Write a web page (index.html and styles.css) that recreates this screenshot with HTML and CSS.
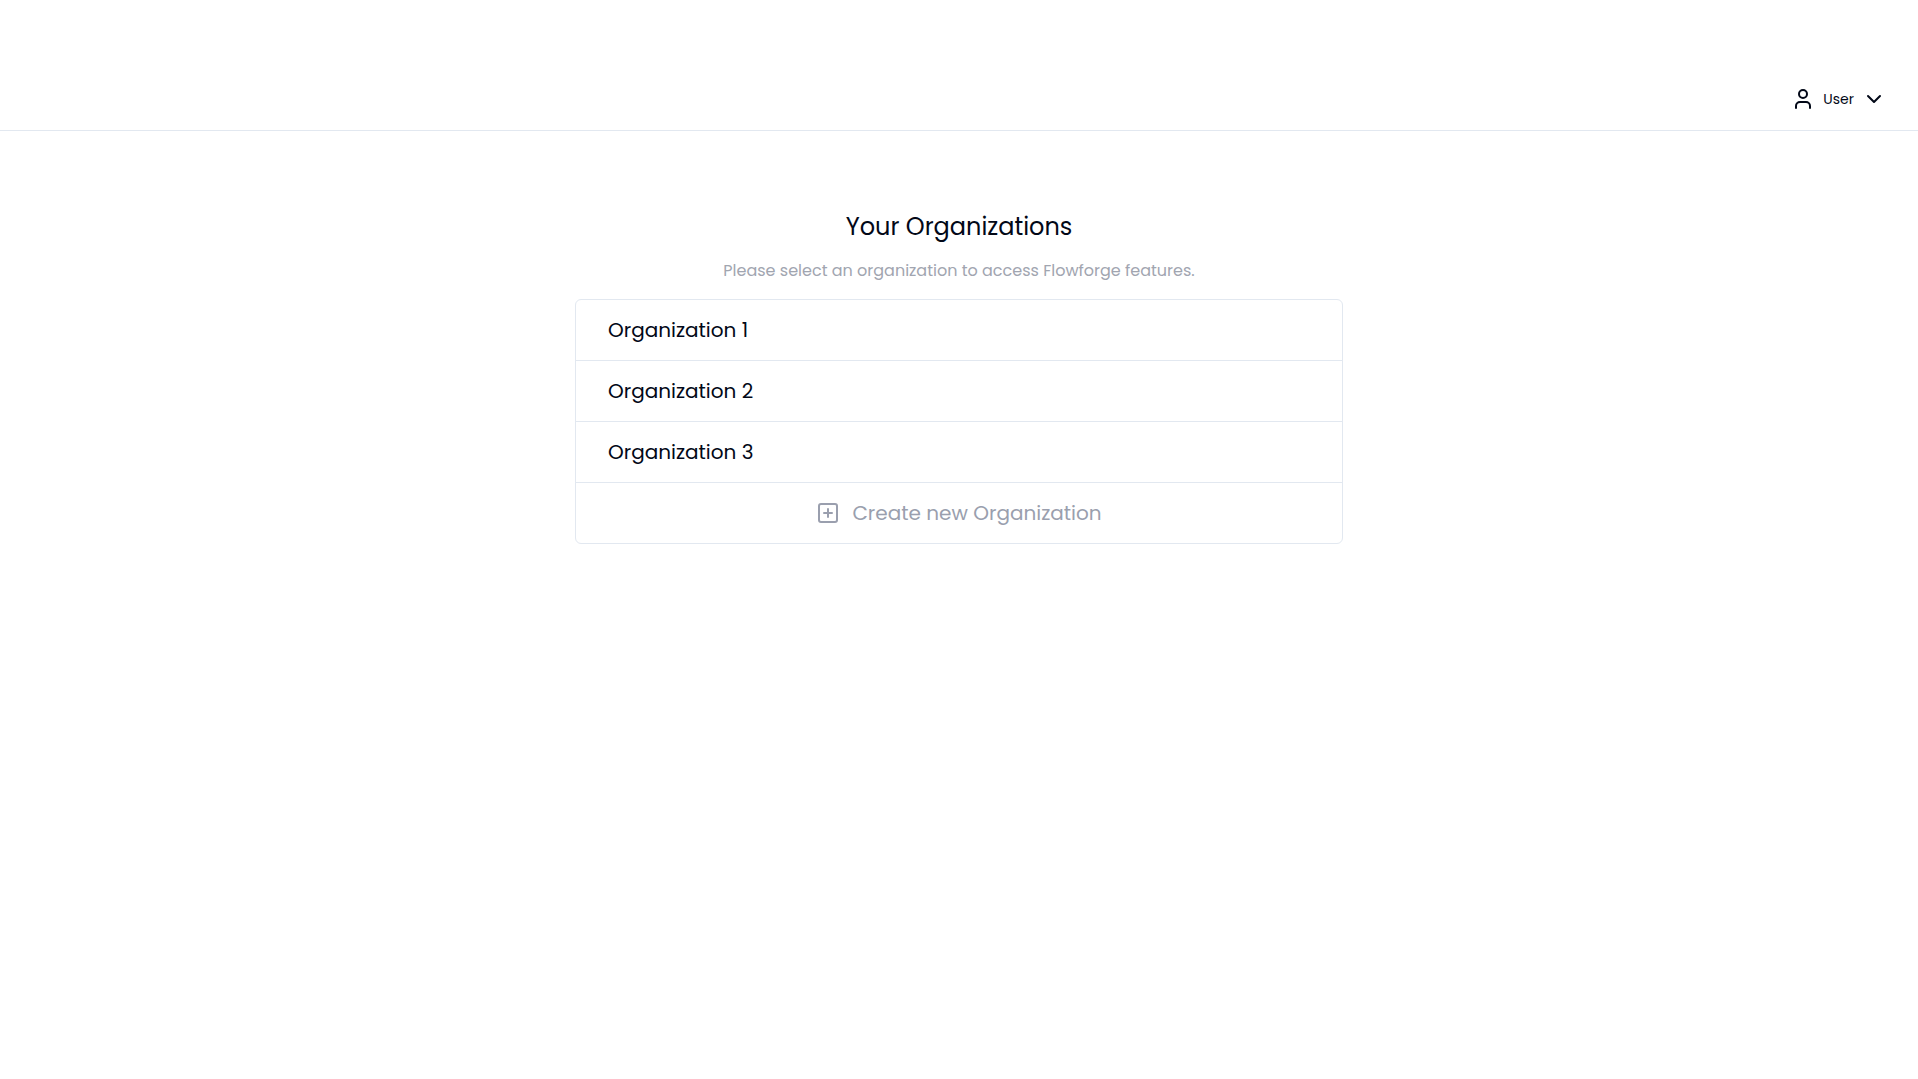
FILE: index.html
```html
<!DOCTYPE html>
<html lang="en">
<head>
<meta charset="utf-8">
<meta name="viewport" content="width=device-width, initial-scale=1">
<title>Your Organizations</title>
<link rel="stylesheet" href="styles.css">
</head>
<body>
<header class="topbar">
  <button class="user-menu" type="button" aria-haspopup="menu">
    <svg class="icon" viewBox="0 0 24 24" aria-hidden="true"><circle cx="12" cy="7" r="4"/><path d="M5 21v-2a4 4 0 0 1 4-4h6a4 4 0 0 1 4 4v2"/></svg>
    <span>User</span>
    <svg class="icon" viewBox="0 0 24 24" aria-hidden="true"><path d="m6 9 6 6 6-6"/></svg>
  </button>
</header>
<main class="content">
  <h1 class="title">Your Organizations</h1>
  <p class="subtitle">Please select an organization to access Flowforge features.</p>
  <ul class="org-list">
    <li><a class="org-row" href="#org-1">Organization 1</a></li>
    <li><a class="org-row" href="#org-2">Organization 2</a></li>
    <li><a class="org-row" href="#org-3">Organization 3</a></li>
    <li>
      <button class="org-row org-create" type="button">
        <svg class="icon" viewBox="0 0 24 24" aria-hidden="true"><rect x="3" y="3" width="18" height="18" rx="2"/><path d="M12 8v8M8 12h8"/></svg>
        <span>Create new Organization</span>
      </button>
    </li>
  </ul>
</main>
</body>
</html>
```
FILE: styles.css
```css
* {
  box-sizing: border-box;
}

body {
  margin: 0;
  background: #fff;
  color: #020817;
  font-family: Poppins, Inter, sans-serif;
  font-size: 16px;
  line-height: 24px;
}

button {
  border: 0;
  background: none;
  color: inherit;
  font: inherit;
  cursor: pointer;
}

.icon {
  width: 24px;
  height: 24px;
  flex: none;
  fill: none;
  stroke: currentColor;
  stroke-width: 2;
  stroke-linecap: round;
  stroke-linejoin: round;
}

.topbar {
  display: flex;
  justify-content: flex-end;
  padding: 87px 32px 19px;
  border-bottom: 1px solid #e2e8f0;
}

.user-menu {
  display: flex;
  align-items: center;
  gap: 8px;
  padding: 0;
  font-size: 14px;
}

.content {
  display: flex;
  flex-direction: column;
  align-items: center;
  padding: 80px 16px;
}

.title {
  margin: 0 0 16px;
  font-size: 24px;
  font-weight: 400;
  line-height: 32px;
}

.subtitle {
  margin: 0 0 16px;
  color: #a1a5b0;
}

.org-list {
  width: 100%;
  max-width: 768px;
  margin: 0;
  padding: 0;
  list-style: none;
  border: 1px solid #e2e8f0;
  border-radius: 6px;
}

.org-list li + li {
  border-top: 1px solid #e2e8f0;
}

.org-row {
  display: flex;
  align-items: center;
  width: 100%;
  padding: 16px 32px;
  color: inherit;
  font-size: 20px;
  line-height: 28px;
  text-decoration: none;
}

.org-create {
  justify-content: center;
  gap: 12px;
  color: #9a9fae;
}
```
